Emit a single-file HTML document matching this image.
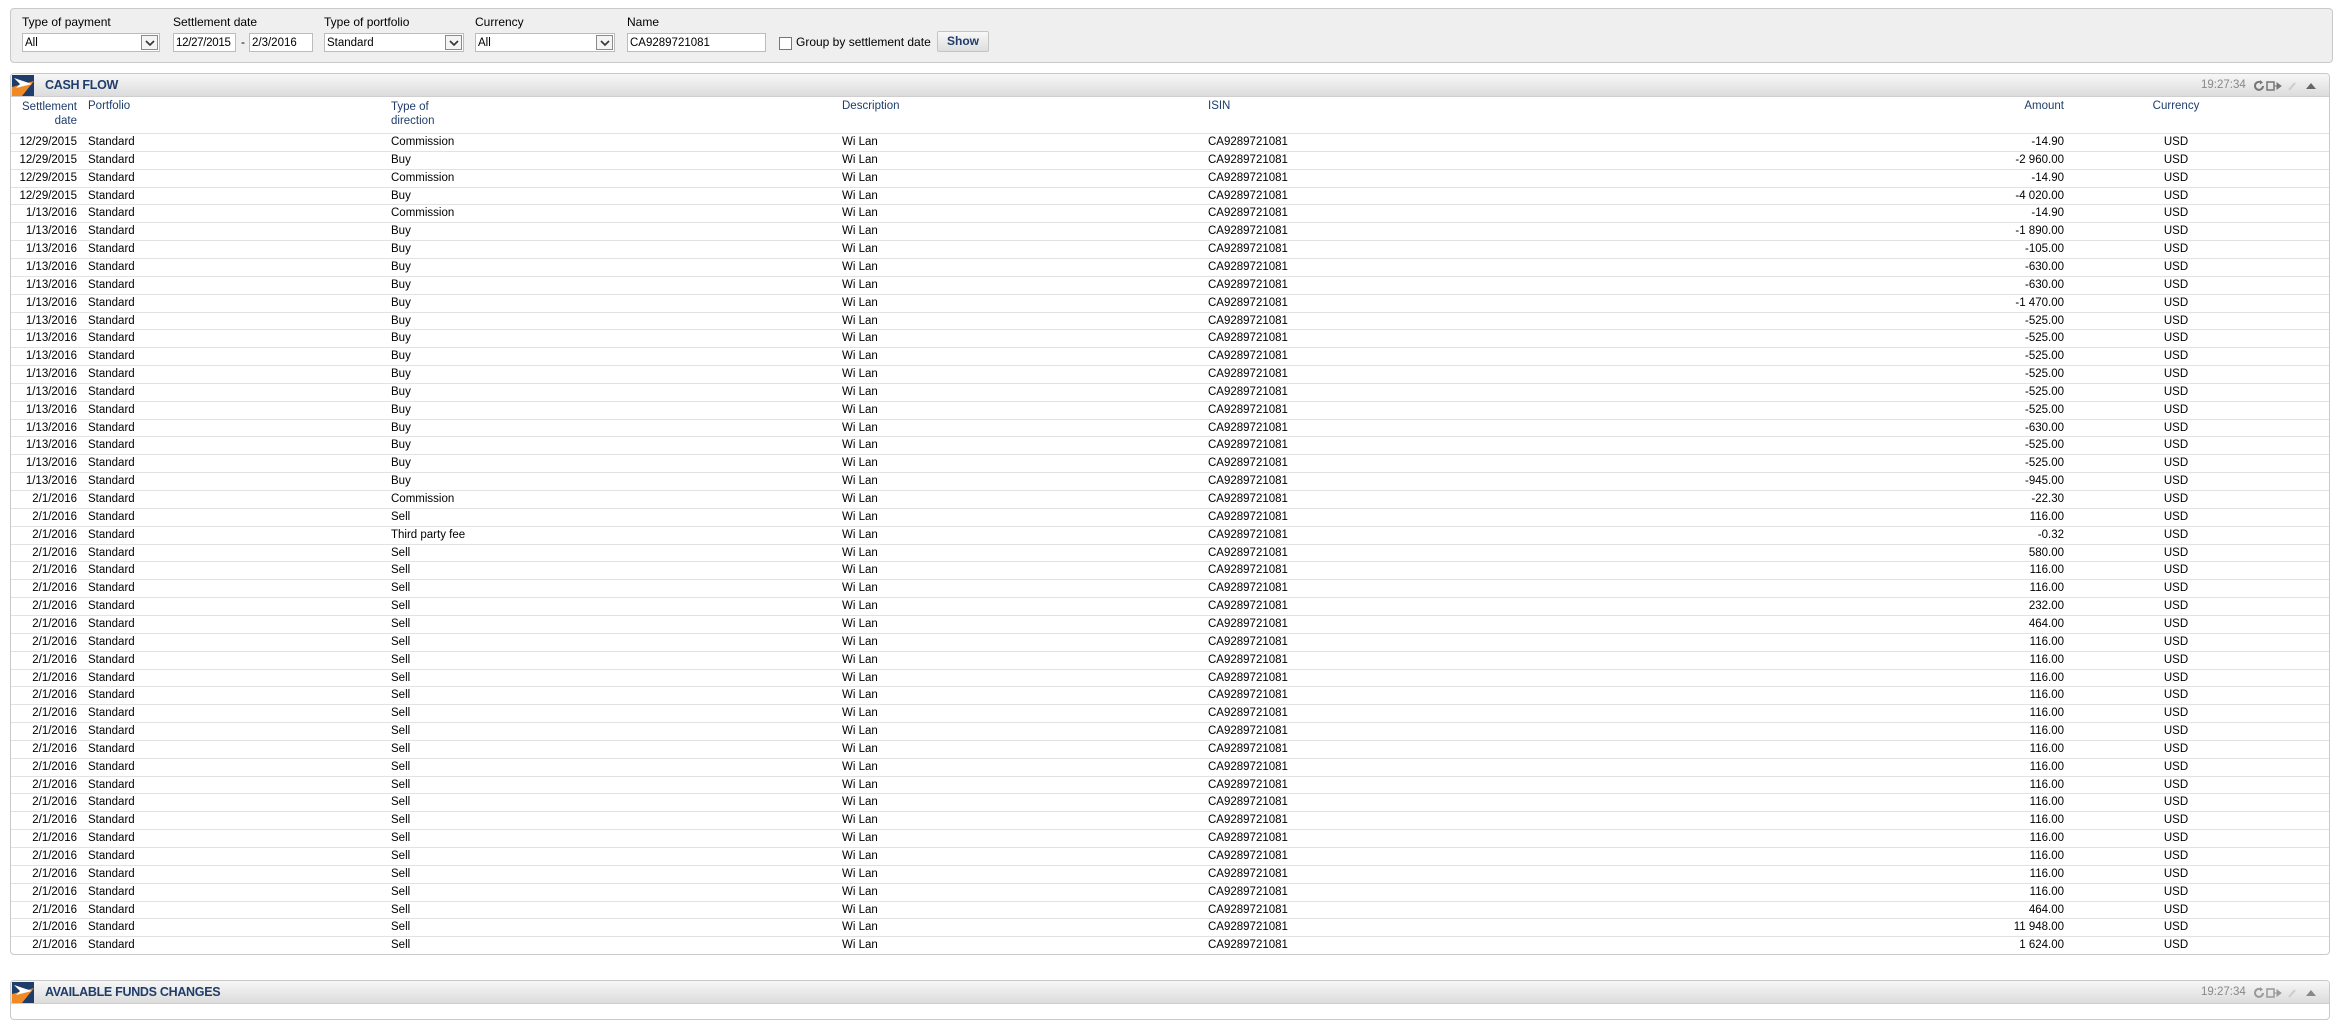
<!DOCTYPE html>
<html><head><meta charset="utf-8"><style>
*{box-sizing:border-box}
body{margin:0;width:2341px;height:1010px;background:#fff;font-family:"Liberation Sans",Arial,sans-serif;font-size:11.5px;color:#000;position:relative;overflow:hidden}
.abs{position:absolute}
.fp{left:10px;top:8px;width:2323px;height:55px;background:#efefef;border:1px solid #c9c9c9;border-radius:4px}
.lbl{top:15px;font-size:12px;color:#000}
.inp{top:33px;height:19px;background:#fff;border:1px solid #bcbcbc;padding:2px 2px;font-size:11.5px;line-height:14px;white-space:nowrap;overflow:hidden}
.arr{position:absolute;right:1px;top:1px;width:17px;height:15px;border:1px solid #8a8a8a;background:#f4f4f4}
.arr svg{position:absolute;left:3px;top:3px}
.btn{left:937px;top:31px;width:52px;height:21px;border:1px solid #c5c5c5;border-radius:2px;background:linear-gradient(#f8f8f8,#dedede);color:#1f3d6b;font-weight:bold;font-size:12px;text-align:center;line-height:19px}
.panel{left:10px;width:2320px;border:1px solid #c9c9c9;border-radius:4px;overflow:hidden}
.hd{height:23px;background:linear-gradient(#f7f7f7,#dcdcdc);border-bottom:1px solid #cfcfcf;position:relative}
.hd .t{position:absolute;left:34px;top:4px;color:#1f3d6b;font-weight:bold;font-size:12.5px;letter-spacing:-0.3px}
.logo{position:absolute;left:1px;top:1px;width:22px;height:21px}
.time{position:absolute;left:2190px;top:5px;color:#888;font-size:11.5px}
.ch{color:#1f3d6b;font-size:11.5px}
.row{position:absolute;left:0;width:2318px;height:17.85px;border-top:1px solid #e2e2e2}
.row span,.hrow span{position:absolute;top:2px;white-space:nowrap}
.c1{right:2252px;text-align:right}
.c2{left:77px}.c3{left:380px}.c4{left:831px}.c5{left:1197px}
.c6{right:265px;text-align:right}
.c7{left:2140px;width:50px;text-align:center}
</style></head><body>
<div class="abs fp"></div>
<div class="abs lbl" style="left:22px">Type of payment</div>
<div class="abs lbl" style="left:173px">Settlement date</div>
<div class="abs lbl" style="left:324px">Type of portfolio</div>
<div class="abs lbl" style="left:475px">Currency</div>
<div class="abs lbl" style="left:627px">Name</div>
<div class="abs inp" style="left:22px;width:138px">All<div class="arr"><svg width="10" height="8"><path d="M1 2 L5 6 L9 2" stroke="#333" stroke-width="1.6" fill="none"/></svg></div></div>
<div class="abs inp" style="left:173px;width:63px;letter-spacing:-0.3px">12/27/2015</div>
<div class="abs" style="left:241px;top:35px;font-size:12px">-</div>
<div class="abs inp" style="left:249px;width:64px">2/3/2016</div>
<div class="abs inp" style="left:324px;width:140px">Standard<div class="arr"><svg width="10" height="8"><path d="M1 2 L5 6 L9 2" stroke="#333" stroke-width="1.6" fill="none"/></svg></div></div>
<div class="abs inp" style="left:475px;width:140px">All<div class="arr"><svg width="10" height="8"><path d="M1 2 L5 6 L9 2" stroke="#333" stroke-width="1.6" fill="none"/></svg></div></div>
<div class="abs inp" style="left:627px;width:139px">CA9289721081</div>
<div class="abs" style="left:779px;top:37px;width:13px;height:13px;border:1px solid #777;background:#fff"></div>
<div class="abs" style="left:796px;top:35px;font-size:12px">Group by settlement date</div>
<div class="abs btn">Show</div>

<div class="abs panel" style="top:73px;height:882px">
<div class="hd"><svg class="logo" viewBox="0 0 22 21"><rect width="22" height="21" fill="#1f3d6b"/><path d="M0 21 L0 12 L22 6 L10 21Z" fill="#f08a24"/><path d="M2 3 L20 9 L4 13 L8 9Z" fill="#fff"/></svg><span class="t">CASH FLOW</span><span class="time">19:27:34</span>
<svg style="position:absolute;left:2242px;top:6px" width="70" height="12"><path d="M7 2 A4 4 0 1 0 10 6" stroke="#777" stroke-width="2" fill="none"/><path d="M7 0 L10 2.5 L7 4.5Z" fill="#777"/><rect x="14" y="2" width="7" height="8" stroke="#777" stroke-width="1.5" fill="none"/><path d="M21 6 L25 6 M24 3 L28 6 L24 9Z" stroke="#777" fill="#777"/><path d="M36 10 L42 3" stroke="#ccc" stroke-width="2"/><path d="M53 9 L58 3 L63 9Z" fill="#666"/></svg></div>
<div class="hrow ch" style="position:absolute;top:24px;left:0;width:2318px;height:36px">
<span class="c1" style="top:2px;line-height:14px;text-align:right">Settlement<br>date</span>
<span class="c2" style="top:2px">Portfolio</span>
<span class="c3" style="top:2px;line-height:14px">Type of<br>direction</span>
<span class="c4" style="top:2px">Description</span>
<span class="c5" style="top:2px">ISIN</span>
<span class="c6" style="top:2px">Amount</span>
<span class="c7" style="top:2px;left:2130px;width:70px">Currency</span>
</div>
<div style="position:absolute;top:59px;left:0">
<div class="row" style="top:0px"><span class="c1">12/29/2015</span><span class="c2">Standard</span><span class="c3">Commission</span><span class="c4">Wi Lan</span><span class="c5">CA9289721081</span><span class="c6">-14.90</span><span class="c7">USD</span></div>
<div class="row" style="top:17.85px"><span class="c1">12/29/2015</span><span class="c2">Standard</span><span class="c3">Buy</span><span class="c4">Wi Lan</span><span class="c5">CA9289721081</span><span class="c6">-2 960.00</span><span class="c7">USD</span></div>
<div class="row" style="top:35.7px"><span class="c1">12/29/2015</span><span class="c2">Standard</span><span class="c3">Commission</span><span class="c4">Wi Lan</span><span class="c5">CA9289721081</span><span class="c6">-14.90</span><span class="c7">USD</span></div>
<div class="row" style="top:53.55px"><span class="c1">12/29/2015</span><span class="c2">Standard</span><span class="c3">Buy</span><span class="c4">Wi Lan</span><span class="c5">CA9289721081</span><span class="c6">-4 020.00</span><span class="c7">USD</span></div>
<div class="row" style="top:71.4px"><span class="c1">1/13/2016</span><span class="c2">Standard</span><span class="c3">Commission</span><span class="c4">Wi Lan</span><span class="c5">CA9289721081</span><span class="c6">-14.90</span><span class="c7">USD</span></div>
<div class="row" style="top:89.25px"><span class="c1">1/13/2016</span><span class="c2">Standard</span><span class="c3">Buy</span><span class="c4">Wi Lan</span><span class="c5">CA9289721081</span><span class="c6">-1 890.00</span><span class="c7">USD</span></div>
<div class="row" style="top:107.1px"><span class="c1">1/13/2016</span><span class="c2">Standard</span><span class="c3">Buy</span><span class="c4">Wi Lan</span><span class="c5">CA9289721081</span><span class="c6">-105.00</span><span class="c7">USD</span></div>
<div class="row" style="top:124.95px"><span class="c1">1/13/2016</span><span class="c2">Standard</span><span class="c3">Buy</span><span class="c4">Wi Lan</span><span class="c5">CA9289721081</span><span class="c6">-630.00</span><span class="c7">USD</span></div>
<div class="row" style="top:142.8px"><span class="c1">1/13/2016</span><span class="c2">Standard</span><span class="c3">Buy</span><span class="c4">Wi Lan</span><span class="c5">CA9289721081</span><span class="c6">-630.00</span><span class="c7">USD</span></div>
<div class="row" style="top:160.65px"><span class="c1">1/13/2016</span><span class="c2">Standard</span><span class="c3">Buy</span><span class="c4">Wi Lan</span><span class="c5">CA9289721081</span><span class="c6">-1 470.00</span><span class="c7">USD</span></div>
<div class="row" style="top:178.5px"><span class="c1">1/13/2016</span><span class="c2">Standard</span><span class="c3">Buy</span><span class="c4">Wi Lan</span><span class="c5">CA9289721081</span><span class="c6">-525.00</span><span class="c7">USD</span></div>
<div class="row" style="top:196.35px"><span class="c1">1/13/2016</span><span class="c2">Standard</span><span class="c3">Buy</span><span class="c4">Wi Lan</span><span class="c5">CA9289721081</span><span class="c6">-525.00</span><span class="c7">USD</span></div>
<div class="row" style="top:214.2px"><span class="c1">1/13/2016</span><span class="c2">Standard</span><span class="c3">Buy</span><span class="c4">Wi Lan</span><span class="c5">CA9289721081</span><span class="c6">-525.00</span><span class="c7">USD</span></div>
<div class="row" style="top:232.05px"><span class="c1">1/13/2016</span><span class="c2">Standard</span><span class="c3">Buy</span><span class="c4">Wi Lan</span><span class="c5">CA9289721081</span><span class="c6">-525.00</span><span class="c7">USD</span></div>
<div class="row" style="top:249.9px"><span class="c1">1/13/2016</span><span class="c2">Standard</span><span class="c3">Buy</span><span class="c4">Wi Lan</span><span class="c5">CA9289721081</span><span class="c6">-525.00</span><span class="c7">USD</span></div>
<div class="row" style="top:267.75px"><span class="c1">1/13/2016</span><span class="c2">Standard</span><span class="c3">Buy</span><span class="c4">Wi Lan</span><span class="c5">CA9289721081</span><span class="c6">-525.00</span><span class="c7">USD</span></div>
<div class="row" style="top:285.6px"><span class="c1">1/13/2016</span><span class="c2">Standard</span><span class="c3">Buy</span><span class="c4">Wi Lan</span><span class="c5">CA9289721081</span><span class="c6">-630.00</span><span class="c7">USD</span></div>
<div class="row" style="top:303.45px"><span class="c1">1/13/2016</span><span class="c2">Standard</span><span class="c3">Buy</span><span class="c4">Wi Lan</span><span class="c5">CA9289721081</span><span class="c6">-525.00</span><span class="c7">USD</span></div>
<div class="row" style="top:321.3px"><span class="c1">1/13/2016</span><span class="c2">Standard</span><span class="c3">Buy</span><span class="c4">Wi Lan</span><span class="c5">CA9289721081</span><span class="c6">-525.00</span><span class="c7">USD</span></div>
<div class="row" style="top:339.15px"><span class="c1">1/13/2016</span><span class="c2">Standard</span><span class="c3">Buy</span><span class="c4">Wi Lan</span><span class="c5">CA9289721081</span><span class="c6">-945.00</span><span class="c7">USD</span></div>
<div class="row" style="top:357px"><span class="c1">2/1/2016</span><span class="c2">Standard</span><span class="c3">Commission</span><span class="c4">Wi Lan</span><span class="c5">CA9289721081</span><span class="c6">-22.30</span><span class="c7">USD</span></div>
<div class="row" style="top:374.85px"><span class="c1">2/1/2016</span><span class="c2">Standard</span><span class="c3">Sell</span><span class="c4">Wi Lan</span><span class="c5">CA9289721081</span><span class="c6">116.00</span><span class="c7">USD</span></div>
<div class="row" style="top:392.7px"><span class="c1">2/1/2016</span><span class="c2">Standard</span><span class="c3">Third party fee</span><span class="c4">Wi Lan</span><span class="c5">CA9289721081</span><span class="c6">-0.32</span><span class="c7">USD</span></div>
<div class="row" style="top:410.55px"><span class="c1">2/1/2016</span><span class="c2">Standard</span><span class="c3">Sell</span><span class="c4">Wi Lan</span><span class="c5">CA9289721081</span><span class="c6">580.00</span><span class="c7">USD</span></div>
<div class="row" style="top:428.4px"><span class="c1">2/1/2016</span><span class="c2">Standard</span><span class="c3">Sell</span><span class="c4">Wi Lan</span><span class="c5">CA9289721081</span><span class="c6">116.00</span><span class="c7">USD</span></div>
<div class="row" style="top:446.25px"><span class="c1">2/1/2016</span><span class="c2">Standard</span><span class="c3">Sell</span><span class="c4">Wi Lan</span><span class="c5">CA9289721081</span><span class="c6">116.00</span><span class="c7">USD</span></div>
<div class="row" style="top:464.1px"><span class="c1">2/1/2016</span><span class="c2">Standard</span><span class="c3">Sell</span><span class="c4">Wi Lan</span><span class="c5">CA9289721081</span><span class="c6">232.00</span><span class="c7">USD</span></div>
<div class="row" style="top:481.95px"><span class="c1">2/1/2016</span><span class="c2">Standard</span><span class="c3">Sell</span><span class="c4">Wi Lan</span><span class="c5">CA9289721081</span><span class="c6">464.00</span><span class="c7">USD</span></div>
<div class="row" style="top:499.8px"><span class="c1">2/1/2016</span><span class="c2">Standard</span><span class="c3">Sell</span><span class="c4">Wi Lan</span><span class="c5">CA9289721081</span><span class="c6">116.00</span><span class="c7">USD</span></div>
<div class="row" style="top:517.65px"><span class="c1">2/1/2016</span><span class="c2">Standard</span><span class="c3">Sell</span><span class="c4">Wi Lan</span><span class="c5">CA9289721081</span><span class="c6">116.00</span><span class="c7">USD</span></div>
<div class="row" style="top:535.5px"><span class="c1">2/1/2016</span><span class="c2">Standard</span><span class="c3">Sell</span><span class="c4">Wi Lan</span><span class="c5">CA9289721081</span><span class="c6">116.00</span><span class="c7">USD</span></div>
<div class="row" style="top:553.35px"><span class="c1">2/1/2016</span><span class="c2">Standard</span><span class="c3">Sell</span><span class="c4">Wi Lan</span><span class="c5">CA9289721081</span><span class="c6">116.00</span><span class="c7">USD</span></div>
<div class="row" style="top:571.2px"><span class="c1">2/1/2016</span><span class="c2">Standard</span><span class="c3">Sell</span><span class="c4">Wi Lan</span><span class="c5">CA9289721081</span><span class="c6">116.00</span><span class="c7">USD</span></div>
<div class="row" style="top:589.05px"><span class="c1">2/1/2016</span><span class="c2">Standard</span><span class="c3">Sell</span><span class="c4">Wi Lan</span><span class="c5">CA9289721081</span><span class="c6">116.00</span><span class="c7">USD</span></div>
<div class="row" style="top:606.9px"><span class="c1">2/1/2016</span><span class="c2">Standard</span><span class="c3">Sell</span><span class="c4">Wi Lan</span><span class="c5">CA9289721081</span><span class="c6">116.00</span><span class="c7">USD</span></div>
<div class="row" style="top:624.75px"><span class="c1">2/1/2016</span><span class="c2">Standard</span><span class="c3">Sell</span><span class="c4">Wi Lan</span><span class="c5">CA9289721081</span><span class="c6">116.00</span><span class="c7">USD</span></div>
<div class="row" style="top:642.6px"><span class="c1">2/1/2016</span><span class="c2">Standard</span><span class="c3">Sell</span><span class="c4">Wi Lan</span><span class="c5">CA9289721081</span><span class="c6">116.00</span><span class="c7">USD</span></div>
<div class="row" style="top:660.45px"><span class="c1">2/1/2016</span><span class="c2">Standard</span><span class="c3">Sell</span><span class="c4">Wi Lan</span><span class="c5">CA9289721081</span><span class="c6">116.00</span><span class="c7">USD</span></div>
<div class="row" style="top:678.3px"><span class="c1">2/1/2016</span><span class="c2">Standard</span><span class="c3">Sell</span><span class="c4">Wi Lan</span><span class="c5">CA9289721081</span><span class="c6">116.00</span><span class="c7">USD</span></div>
<div class="row" style="top:696.15px"><span class="c1">2/1/2016</span><span class="c2">Standard</span><span class="c3">Sell</span><span class="c4">Wi Lan</span><span class="c5">CA9289721081</span><span class="c6">116.00</span><span class="c7">USD</span></div>
<div class="row" style="top:714px"><span class="c1">2/1/2016</span><span class="c2">Standard</span><span class="c3">Sell</span><span class="c4">Wi Lan</span><span class="c5">CA9289721081</span><span class="c6">116.00</span><span class="c7">USD</span></div>
<div class="row" style="top:731.85px"><span class="c1">2/1/2016</span><span class="c2">Standard</span><span class="c3">Sell</span><span class="c4">Wi Lan</span><span class="c5">CA9289721081</span><span class="c6">116.00</span><span class="c7">USD</span></div>
<div class="row" style="top:749.7px"><span class="c1">2/1/2016</span><span class="c2">Standard</span><span class="c3">Sell</span><span class="c4">Wi Lan</span><span class="c5">CA9289721081</span><span class="c6">116.00</span><span class="c7">USD</span></div>
<div class="row" style="top:767.55px"><span class="c1">2/1/2016</span><span class="c2">Standard</span><span class="c3">Sell</span><span class="c4">Wi Lan</span><span class="c5">CA9289721081</span><span class="c6">464.00</span><span class="c7">USD</span></div>
<div class="row" style="top:785.4px"><span class="c1">2/1/2016</span><span class="c2">Standard</span><span class="c3">Sell</span><span class="c4">Wi Lan</span><span class="c5">CA9289721081</span><span class="c6">11 948.00</span><span class="c7">USD</span></div>
<div class="row" style="top:803.25px"><span class="c1">2/1/2016</span><span class="c2">Standard</span><span class="c3">Sell</span><span class="c4">Wi Lan</span><span class="c5">CA9289721081</span><span class="c6">1 624.00</span><span class="c7">USD</span></div>
</div>
</div>

<div class="abs panel" style="top:980px;height:40px">
<div class="hd"><svg class="logo" viewBox="0 0 22 21"><rect width="22" height="21" fill="#1f3d6b"/><path d="M0 21 L0 12 L22 6 L10 21Z" fill="#f08a24"/><path d="M2 3 L20 9 L4 13 L8 9Z" fill="#fff"/></svg><span class="t">AVAILABLE FUNDS CHANGES</span><span class="time">19:27:34</span>
<svg style="position:absolute;left:2242px;top:6px" width="70" height="12"><path d="M7 2 A4 4 0 1 0 10 6" stroke="#999" stroke-width="2" fill="none"/><path d="M7 0 L10 2.5 L7 4.5Z" fill="#999"/><rect x="14" y="2" width="7" height="8" stroke="#999" stroke-width="1.5" fill="none"/><path d="M21 6 L25 6 M24 3 L28 6 L24 9Z" stroke="#999" fill="#999"/><path d="M36 10 L42 3" stroke="#ccc" stroke-width="2"/><path d="M53 9 L58 3 L63 9Z" fill="#888"/></svg></div>
</div>
</body></html>
